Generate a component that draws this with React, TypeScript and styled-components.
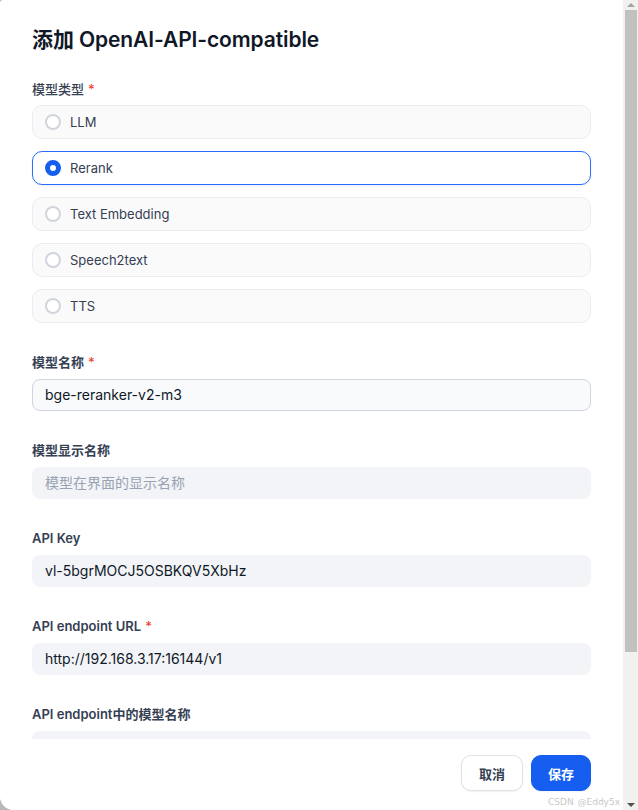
import React from "react";
import styled, { createGlobalStyle } from "styled-components";

const GlobalStyle = createGlobalStyle`
  html, body {
    margin: 0;
    padding: 0;
    height: 100%;
    overflow: hidden;
    background: #b8b8b8;
  }
  body {
    font-family: Inter, "Noto Sans CJK SC", "Noto Sans", sans-serif;
    -webkit-font-smoothing: antialiased;
  }
  #root { height: 100%; }
  * { box-sizing: border-box; }
`;

const Page = styled.div`
  display: flex;
  height: 810px;
  width: 638px;
  position: relative;
`;

const Modal = styled.div`
  flex: 1;
  display: flex;
  flex-direction: column;
  background: #ffffff;
  border-radius: 3px 0 0 14px;
  overflow: hidden;
`;

const Body = styled.div`
  flex: 1;
  overflow: hidden;
  padding: 24px 32px 0 32px;
`;

const Title = styled.h1`
  margin: 0 0 23px 0;
  height: 32px;
  line-height: 32px;
  font-size: 21px;
  font-weight: 600;
  color: #101828;
  letter-spacing: -0.1px;
`;

const Field = styled.div`
  display: flex;
  flex-direction: column;
  margin-bottom: 29px;
`;

const Label = styled.div<{ $gap?: number; $light?: boolean }>`
  height: 20px;
  line-height: 20px;
  font-size: 13px;
  font-weight: ${(p) => (p.$light ? 500 : 600)};
  color: #354052;
  margin-bottom: ${(p) => p.$gap ?? 7}px;
`;

const Star = styled.span`
  color: #f04438;
  margin-left: 4px;
  font-weight: 500;
`;

const OptionList = styled.div`
  display: flex;
  flex-direction: column;
  gap: 12px;
`;

const Option = styled.div<{ $active?: boolean }>`
  display: flex;
  align-items: center;
  gap: 9px;
  height: 34px;
  padding: 0 12px;
  border-radius: 10px;
  border: 1px solid ${(p) => (p.$active ? "#296dff" : "#eaecf0")};
  background: ${(p) => (p.$active ? "#ffffff" : "#fafafb")};
  box-shadow: ${(p) => (p.$active ? "0 1px 2px rgba(16,24,40,0.08)" : "none")};
  font-size: 13px;
  color: #354052;
`;

const Radio = styled.span<{ $active?: boolean }>`
  width: 16px;
  height: 16px;
  border-radius: 50%;
  flex-shrink: 0;
  border: ${(p) => (p.$active ? "5px solid #155eef" : "2px solid #d0d5dd")};
  background: #ffffff;
`;

const Input = styled.div<{ $outlined?: boolean; $placeholder?: boolean }>`
  height: 32px;
  line-height: 30px;
  padding: 0 12px;
  border-radius: 8px;
  border: 1px solid ${(p) => (p.$outlined ? "#d0d5dd" : "transparent")};
  background: ${(p) => (p.$outlined ? "#f9fafb" : "#f2f4f7")};
  font-size: 14px;
  color: ${(p) => (p.$placeholder ? "#98a2b3" : "#101828")};
  white-space: nowrap;
  overflow: hidden;
`;

const Footer = styled.div`
  display: flex;
  justify-content: flex-end;
  gap: 8px;
  padding: 16px 32px 19px 32px;
  background: #ffffff;
`;

const Button = styled.button<{ $primary?: boolean }>`
  height: 36px;
  padding: 0 ${(p) => (p.$primary ? 16 : 17)}px;
  border-radius: 10px;
  font-family: Inter, "Noto Sans CJK SC", sans-serif;
  font-size: 13px;
  font-weight: 700;
  cursor: pointer;
  border: 1px solid ${(p) => (p.$primary ? "#155eef" : "#e0e2e6")};
  background: ${(p) => (p.$primary ? "#155eef" : "#ffffff")};
  color: ${(p) => (p.$primary ? "#ffffff" : "#354052")};
  box-shadow: 0 1px 2px rgba(16, 24, 40, 0.06);
`;

const ScrollTrack = styled.div`
  width: 15px;
  flex-shrink: 0;
  background: #f1f1f1;
  display: flex;
  flex-direction: column;
  align-items: center;
`;

const Arrow = styled.div<{ $down?: boolean; $color: string }>`
  width: 15px;
  height: 10px;
  display: flex;
  align-items: center;
  justify-content: center;
  &::after {
    content: "";
    width: 0;
    height: 0;
    border-left: 4px solid transparent;
    border-right: 4px solid transparent;
    ${(p) =>
      p.$down
        ? `border-top: 4px solid ${p.$color};`
        : `border-bottom: 4px solid ${p.$color};`}
  }
`;

const Thumb = styled.div`
  width: 12px;
  height: 642px;
  margin-left: 2px;
  margin-right: 1px;
  background: #c1c1c1;
`;

const Spacer = styled.div`
  flex: 1;
`;

const Watermark = styled.div`
  position: absolute;
  right: 18px;
  bottom: 3px;
  font-family: "DejaVu Sans", sans-serif;
  font-size: 9px;
  color: #c8c8c8;
  text-shadow: 0 0 1px #ffffff;
  word-spacing: 1px;
`;

const types = ["LLM", "Rerank", "Text Embedding", "Speech2text", "TTS"];

export default function App() {
  const selected = "Rerank";
  return (
    <>
      <GlobalStyle />
      <Page>
        <Modal>
          <Body>
            <Title>添加 OpenAI-API-compatible</Title>
            <Field>
              <Label $gap={6} $light>
                模型类型<Star>*</Star>
              </Label>
              <OptionList>
                {types.map((t) => (
                  <Option key={t} $active={t === selected}>
                    <Radio $active={t === selected} />
                    {t}
                  </Option>
                ))}
              </OptionList>
            </Field>
            <Field>
              <Label>
                模型名称<Star>*</Star>
              </Label>
              <Input $outlined>bge-reranker-v2-m3</Input>
            </Field>
            <Field>
              <Label>模型显示名称</Label>
              <Input $placeholder>模型在界面的显示名称</Input>
            </Field>
            <Field>
              <Label>API Key</Label>
              <Input>vl-5bgrMOCJ5OSBKQV5XbHz</Input>
            </Field>
            <Field>
              <Label>
                API endpoint URL<Star>*</Star>
              </Label>
              <Input>http://192.168.3.17:16144/v1</Input>
            </Field>
            <Field>
              <Label>API endpoint中的模型名称</Label>
              <Input />
            </Field>
          </Body>
          <Footer>
            <Button>取消</Button>
            <Button $primary>保存</Button>
          </Footer>
        </Modal>
        <ScrollTrack>
          <Arrow $color="#a3a3a3" />
          <Thumb />
          <Spacer />
          <Arrow $down $color="#505050" />
        </ScrollTrack>
        <Watermark>CSDN @Eddy5x</Watermark>
      </Page>
    </>
  );
}
